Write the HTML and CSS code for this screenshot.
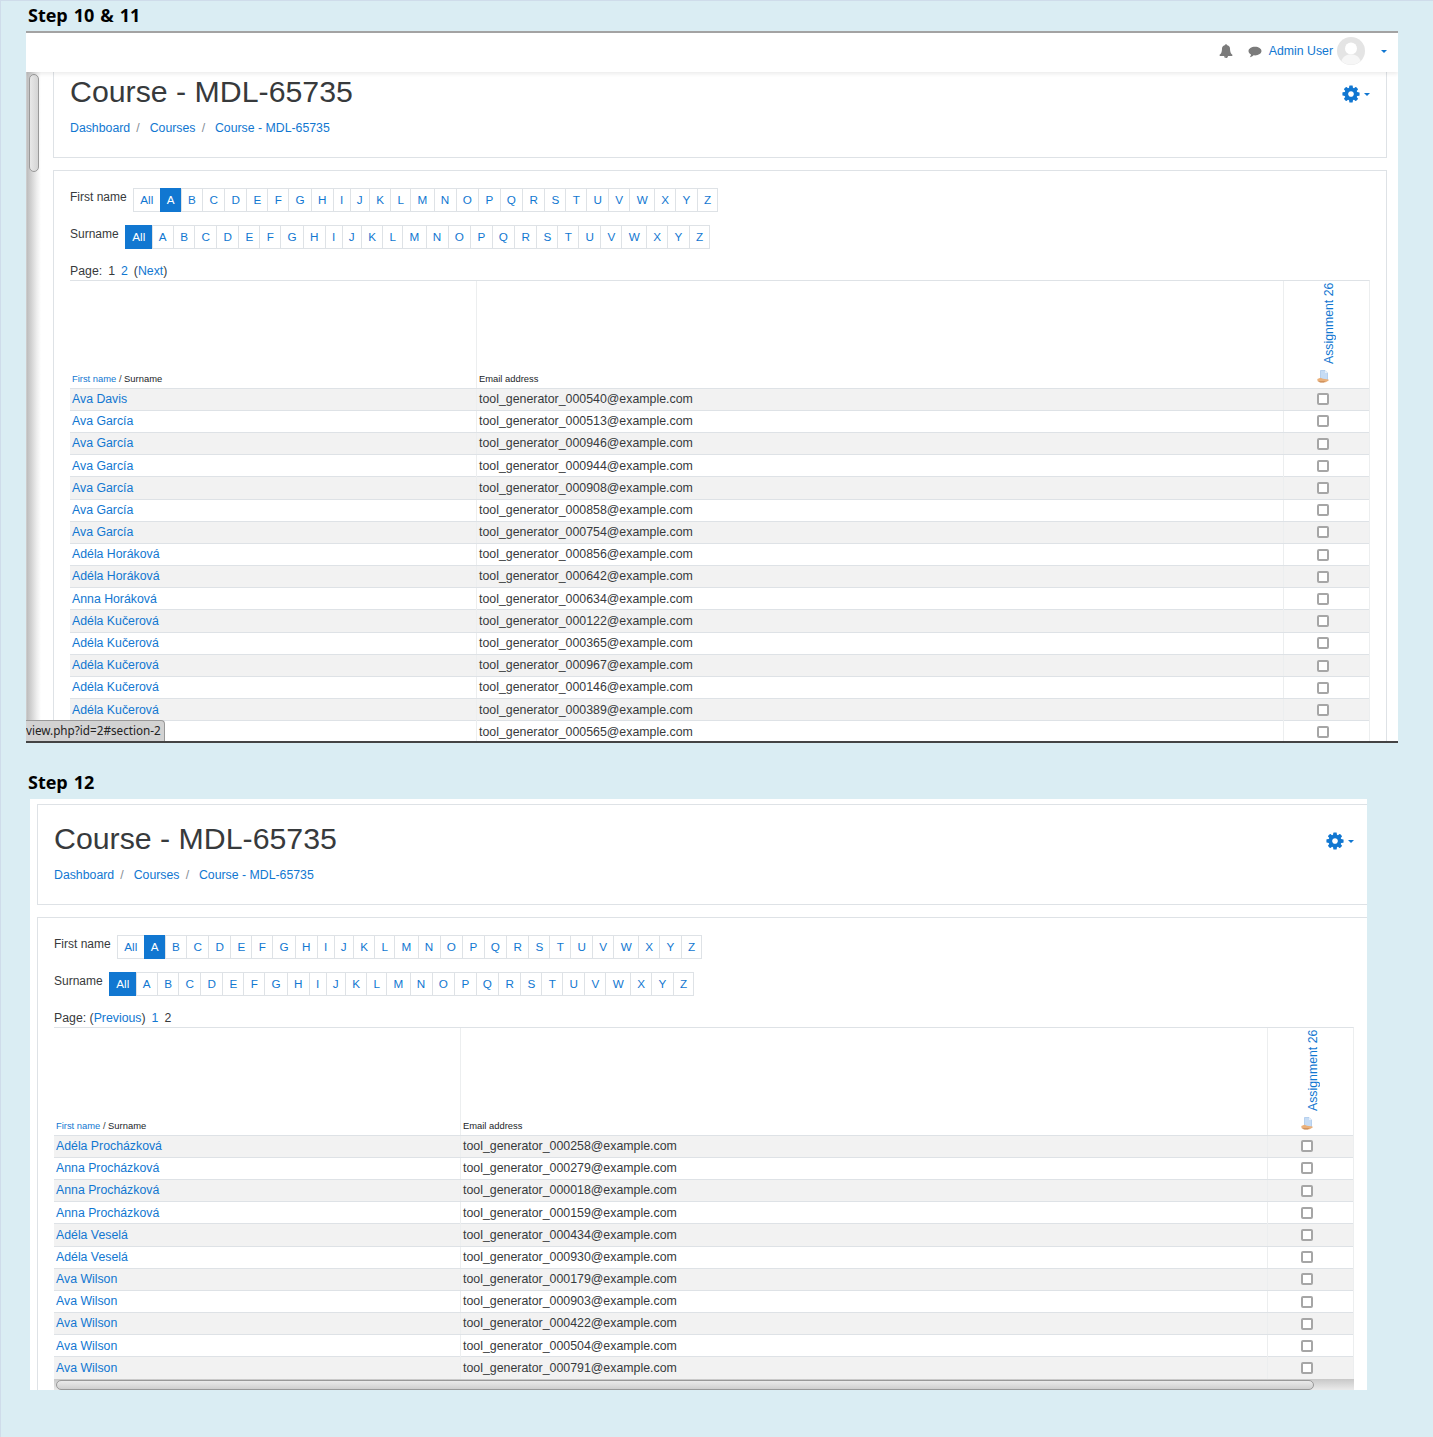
FILE: index.html
```html
<!DOCTYPE html>
<html lang="en">
<head>
<meta charset="utf-8">
<title>Course - MDL-65735</title>
<link rel="stylesheet" href="styles.css">
</head>
<body>
<svg class="defs" width="0" height="0" aria-hidden="true">
  <symbol id="cog" viewBox="0 0 1792 1792"><path d="M1152 896q0-106-75-181t-181-75-181 75-75 181 75 181 181 75 181-75 75-181zm512-109v222q0 12-8 23t-20 13l-185 28q-19 54-39 91 35 50 107 138 10 12 10 25t-9 23q-27 37-99 108t-94 71q-12 0-26-9l-138-108q-44 23-91 38-16 136-29 186-7 28-36 28h-222q-14 0-24.5-8.5t-11.5-21.5l-28-184q-49-16-90-37l-141 107q-10 9-25 9-14 0-25-11-126-114-165-168-7-10-7-23 0-12 8-23 15-21 51-66.5t54-70.5q-27-50-41-99l-183-27q-13-2-21-12.5t-8-23.5v-222q0-12 8-23t19-13l186-28q14-46 39-92-40-57-107-138-10-12-10-24 0-10 9-23 26-36 98.5-107.5t94.5-71.5q13 0 26 10l138 107q44-23 91-38 16-136 29-186 7-28 36-28h222q14 0 24.5 8.5t11.5 21.5l28 184q49 16 90 37l142-107q9-9 24-9 13 0 25 10 129 119 165 170 7 8 7 22 0 12-8 23-15 21-51 66.5t-54 70.5q26 50 41 98l183 28q13 2 21 12.5t8 23.5z"/></symbol>
  <symbol id="sub" viewBox="0 0 12 13"><path d="M3.500.5h4.500l2.500 2.500v7.500h-7z" fill="#c6dcf5" stroke="#a3c3e8" stroke-width=".7"/><path d="M8 .5v2.500h2.500z" fill="#e8f1fb"/><path d="M.3 9 3.500 7.800l2.500 1 5.500.6.200 1.200-3 1.700H4L.6 11.300z" fill="#eab07a"/><path d="M1 11.300h7.500l-1.500 1.200H3z" fill="#c98a55"/></symbol>
</svg>

<h2 class="step step-first">Step 10 &amp; 11</h2>
<section class="shot shot-one">
  <header class="navbar">
    <svg class="nav-icon" width="14" height="14" viewBox="0 0 1792 1792"><path fill="#7b7b7b" d="M912 1696q0-16-16-16-59 0-101.5-42.5t-42.5-101.5q0-16-16-16t-16 16q0 73 51.5 124.5t124.5 51.5q16 0 16-16zm816-288q0 52-38 90t-90 38h-448q0 106-75 181t-181 75-181-75-75-181h-448q-52 0-90-38t-38-90q50-42 91-88t85-119.5 74.5-158.5 50-206 19.5-260q0-152 117-282.5t307-158.5q-8-19-8-39 0-40 28-68t68-28 68 28 28 68q0 20-8 39 190 28 307 158.5t117 282.5q0 139 19.5 260t50 206 74.5 158.5 85 119.5 91 88z"/></svg>
    <svg class="nav-chat" width="14" height="12" viewBox="0 0 14 12"><path fill="#7b7b7b" d="M7 .8c3.600 0 6.500 1.900 6.500 4.300S10.600 9.400 7 9.400c-.5 0-1 0-1.500-.1C4.600 10.300 3.300 11 1.800 11.200c.7-.8 1.100-1.600 1.200-2.600C1.400 7.800.5 6.500.5 5.100.5 2.700 3.400.8 7 .8z"/></svg>
    <a class="nav-user" href="#">Admin User</a>
    <svg class="avatar" width="28" height="28" viewBox="0 0 28 28"><circle cx="14" cy="14" r="14" fill="#e4e4e4"/><circle cx="14" cy="11.500" r="6" fill="#fff"/><path d="M4.500 24c1.500-5 5-6.500 9.500-6.500s8 1.500 9.500 6.500a14 14 0 0 1-19 0z" fill="#f6f6f6"/></svg>
    <span class="caret"></span>
  </header>
  <div class="viewport">
    <div class="vscroll"><span class="vthumb"></span></div>
    <div class="page page-under-nav">
      <div class="card card-head">
        <div class="head-row">
          <h1 class="title">Course - MDL-65735</h1>
          <span class="settings"><svg class="cog" width="20" height="20"><use href="#cog"/></svg><span class="caret"></span></span>
        </div>
        <nav class="crumbs"><a href="#">Dashboard</a><span class="sep">/</span><a href="#">Courses</a><span class="sep">/</span><a href="#">Course - MDL-65735</a></nav>
      </div>
      <div class="card card-body">
        <div class="bar"><span class="bar-label">First name</span><ul class="letters"><li><a href="#">All</a></li><li class="on"><a href="#">A</a></li><li><a href="#">B</a></li><li><a href="#">C</a></li><li><a href="#">D</a></li><li><a href="#">E</a></li><li><a href="#">F</a></li><li><a href="#">G</a></li><li><a href="#">H</a></li><li><a href="#">I</a></li><li><a href="#">J</a></li><li><a href="#">K</a></li><li><a href="#">L</a></li><li><a href="#">M</a></li><li><a href="#">N</a></li><li><a href="#">O</a></li><li><a href="#">P</a></li><li><a href="#">Q</a></li><li><a href="#">R</a></li><li><a href="#">S</a></li><li><a href="#">T</a></li><li><a href="#">U</a></li><li><a href="#">V</a></li><li><a href="#">W</a></li><li><a href="#">X</a></li><li><a href="#">Y</a></li><li><a href="#">Z</a></li></ul></div>
        <div class="bar"><span class="bar-label">Surname</span><ul class="letters"><li class="on"><a href="#">All</a></li><li><a href="#">A</a></li><li><a href="#">B</a></li><li><a href="#">C</a></li><li><a href="#">D</a></li><li><a href="#">E</a></li><li><a href="#">F</a></li><li><a href="#">G</a></li><li><a href="#">H</a></li><li><a href="#">I</a></li><li><a href="#">J</a></li><li><a href="#">K</a></li><li><a href="#">L</a></li><li><a href="#">M</a></li><li><a href="#">N</a></li><li><a href="#">O</a></li><li><a href="#">P</a></li><li><a href="#">Q</a></li><li><a href="#">R</a></li><li><a href="#">S</a></li><li><a href="#">T</a></li><li><a href="#">U</a></li><li><a href="#">V</a></li><li><a href="#">W</a></li><li><a href="#">X</a></li><li><a href="#">Y</a></li><li><a href="#">Z</a></li></ul></div>
        <p class="paging"><span class="pg-label">Page:</span><span class="pg-first">1</span><a class="pg" href="#">2</a><span class="pg">(<a href="#">Next</a>)</span></p>
        <div class="grid">
          <div class="row row-head"><div class="c c1"><span class="th"><a href="#">First name</a> / <b>Surname</b></span></div><div class="c c2"><span class="th"><b>Email address</b></span></div><div class="c c3"><a class="vlink" href="#">Assignment 26</a><svg class="sub" width="12" height="13"><use href="#sub"/></svg></div></div>
          <div class="row"><div class="c c1"><a href="#">Ava Davis</a></div><div class="c c2">tool_generator_000540@example.com</div><div class="c c3"><span class="check"></span></div></div>
          <div class="row"><div class="c c1"><a href="#">Ava García</a></div><div class="c c2">tool_generator_000513@example.com</div><div class="c c3"><span class="check"></span></div></div>
          <div class="row"><div class="c c1"><a href="#">Ava García</a></div><div class="c c2">tool_generator_000946@example.com</div><div class="c c3"><span class="check"></span></div></div>
          <div class="row"><div class="c c1"><a href="#">Ava García</a></div><div class="c c2">tool_generator_000944@example.com</div><div class="c c3"><span class="check"></span></div></div>
          <div class="row"><div class="c c1"><a href="#">Ava García</a></div><div class="c c2">tool_generator_000908@example.com</div><div class="c c3"><span class="check"></span></div></div>
          <div class="row"><div class="c c1"><a href="#">Ava García</a></div><div class="c c2">tool_generator_000858@example.com</div><div class="c c3"><span class="check"></span></div></div>
          <div class="row"><div class="c c1"><a href="#">Ava García</a></div><div class="c c2">tool_generator_000754@example.com</div><div class="c c3"><span class="check"></span></div></div>
          <div class="row"><div class="c c1"><a href="#">Adéla Horáková</a></div><div class="c c2">tool_generator_000856@example.com</div><div class="c c3"><span class="check"></span></div></div>
          <div class="row"><div class="c c1"><a href="#">Adéla Horáková</a></div><div class="c c2">tool_generator_000642@example.com</div><div class="c c3"><span class="check"></span></div></div>
          <div class="row"><div class="c c1"><a href="#">Anna Horáková</a></div><div class="c c2">tool_generator_000634@example.com</div><div class="c c3"><span class="check"></span></div></div>
          <div class="row"><div class="c c1"><a href="#">Adéla Kučerová</a></div><div class="c c2">tool_generator_000122@example.com</div><div class="c c3"><span class="check"></span></div></div>
          <div class="row"><div class="c c1"><a href="#">Adéla Kučerová</a></div><div class="c c2">tool_generator_000365@example.com</div><div class="c c3"><span class="check"></span></div></div>
          <div class="row"><div class="c c1"><a href="#">Adéla Kučerová</a></div><div class="c c2">tool_generator_000967@example.com</div><div class="c c3"><span class="check"></span></div></div>
          <div class="row"><div class="c c1"><a href="#">Adéla Kučerová</a></div><div class="c c2">tool_generator_000146@example.com</div><div class="c c3"><span class="check"></span></div></div>
          <div class="row"><div class="c c1"><a href="#">Adéla Kučerová</a></div><div class="c c2">tool_generator_000389@example.com</div><div class="c c3"><span class="check"></span></div></div>
          <div class="row"><div class="c c1"></div><div class="c c2">tool_generator_000565@example.com</div><div class="c c3"><span class="check"></span></div></div>
        </div>
      </div>
    </div>
    <div class="status">view.php?id=2#section-2</div>
  </div>
</section>

<h2 class="step step-second">Step 12</h2>
<section class="shot shot-two">
  <div class="page">
    <div class="card card-head">
      <div class="head-row">
        <h1 class="title">Course - MDL-65735</h1>
        <span class="settings"><svg class="cog" width="20" height="20"><use href="#cog"/></svg><span class="caret"></span></span>
      </div>
      <nav class="crumbs"><a href="#">Dashboard</a><span class="sep">/</span><a href="#">Courses</a><span class="sep">/</span><a href="#">Course - MDL-65735</a></nav>
    </div>
    <div class="card card-body">
      <div class="bar"><span class="bar-label">First name</span><ul class="letters"><li><a href="#">All</a></li><li class="on"><a href="#">A</a></li><li><a href="#">B</a></li><li><a href="#">C</a></li><li><a href="#">D</a></li><li><a href="#">E</a></li><li><a href="#">F</a></li><li><a href="#">G</a></li><li><a href="#">H</a></li><li><a href="#">I</a></li><li><a href="#">J</a></li><li><a href="#">K</a></li><li><a href="#">L</a></li><li><a href="#">M</a></li><li><a href="#">N</a></li><li><a href="#">O</a></li><li><a href="#">P</a></li><li><a href="#">Q</a></li><li><a href="#">R</a></li><li><a href="#">S</a></li><li><a href="#">T</a></li><li><a href="#">U</a></li><li><a href="#">V</a></li><li><a href="#">W</a></li><li><a href="#">X</a></li><li><a href="#">Y</a></li><li><a href="#">Z</a></li></ul></div>
      <div class="bar"><span class="bar-label">Surname</span><ul class="letters"><li class="on"><a href="#">All</a></li><li><a href="#">A</a></li><li><a href="#">B</a></li><li><a href="#">C</a></li><li><a href="#">D</a></li><li><a href="#">E</a></li><li><a href="#">F</a></li><li><a href="#">G</a></li><li><a href="#">H</a></li><li><a href="#">I</a></li><li><a href="#">J</a></li><li><a href="#">K</a></li><li><a href="#">L</a></li><li><a href="#">M</a></li><li><a href="#">N</a></li><li><a href="#">O</a></li><li><a href="#">P</a></li><li><a href="#">Q</a></li><li><a href="#">R</a></li><li><a href="#">S</a></li><li><a href="#">T</a></li><li><a href="#">U</a></li><li><a href="#">V</a></li><li><a href="#">W</a></li><li><a href="#">X</a></li><li><a href="#">Y</a></li><li><a href="#">Z</a></li></ul></div>
      <p class="paging">Page: (<a href="#">Previous</a>)<a class="pg" href="#">1</a><span class="pg">2</span></p>
      <div class="grid">
        <div class="row row-head"><div class="c c1"><span class="th"><a href="#">First name</a> / <b>Surname</b></span></div><div class="c c2"><span class="th"><b>Email address</b></span></div><div class="c c3"><a class="vlink" href="#">Assignment 26</a><svg class="sub" width="12" height="13"><use href="#sub"/></svg></div></div>
        <div class="row"><div class="c c1"><a href="#">Adéla Procházková</a></div><div class="c c2">tool_generator_000258@example.com</div><div class="c c3"><span class="check"></span></div></div>
        <div class="row"><div class="c c1"><a href="#">Anna Procházková</a></div><div class="c c2">tool_generator_000279@example.com</div><div class="c c3"><span class="check"></span></div></div>
        <div class="row"><div class="c c1"><a href="#">Anna Procházková</a></div><div class="c c2">tool_generator_000018@example.com</div><div class="c c3"><span class="check"></span></div></div>
        <div class="row"><div class="c c1"><a href="#">Anna Procházková</a></div><div class="c c2">tool_generator_000159@example.com</div><div class="c c3"><span class="check"></span></div></div>
        <div class="row"><div class="c c1"><a href="#">Adéla Veselá</a></div><div class="c c2">tool_generator_000434@example.com</div><div class="c c3"><span class="check"></span></div></div>
        <div class="row"><div class="c c1"><a href="#">Adéla Veselá</a></div><div class="c c2">tool_generator_000930@example.com</div><div class="c c3"><span class="check"></span></div></div>
        <div class="row"><div class="c c1"><a href="#">Ava Wilson</a></div><div class="c c2">tool_generator_000179@example.com</div><div class="c c3"><span class="check"></span></div></div>
        <div class="row"><div class="c c1"><a href="#">Ava Wilson</a></div><div class="c c2">tool_generator_000903@example.com</div><div class="c c3"><span class="check"></span></div></div>
        <div class="row"><div class="c c1"><a href="#">Ava Wilson</a></div><div class="c c2">tool_generator_000422@example.com</div><div class="c c3"><span class="check"></span></div></div>
        <div class="row"><div class="c c1"><a href="#">Ava Wilson</a></div><div class="c c2">tool_generator_000504@example.com</div><div class="c c3"><span class="check"></span></div></div>
        <div class="row"><div class="c c1"><a href="#">Ava Wilson</a></div><div class="c c2">tool_generator_000791@example.com</div><div class="c c3"><span class="check"></span></div></div>
      </div>
      <div class="hscroll"><span class="hthumb"></span></div>
    </div>
  </div>
</section>
</body>
</html>
```
FILE: styles.css
```css
* { box-sizing: border-box; }
html, body { margin: 0; padding: 0; }
body {
  height: 1437px;
  background: #daedf3;
  border-left: 1px solid #cfdcea;
  border-top: 1px solid #cfdcea;
  font-family: "Liberation Sans", Arial, sans-serif;
  font-size: 12.3px;
  color: #373a3c;
  overflow: hidden;
}
a { color: #1177d1; text-decoration: none; }
.defs { position: absolute; }

.step {
  margin: 0;
  font-family: "Open Sans", "Noto Sans", sans-serif;
  font-size: 18px;
  font-weight: 700;
  line-height: 24px;
  word-spacing: 1.3px;
  color: #000;
  padding-left: 27px;
}
.step-first { padding-top: 2px; height: 30px; }
.step-second { padding-top: 27px; height: 56px; }

.shot { background: #fff; overflow: hidden; }
.shot-one {
  position: relative;
  margin-left: 25px;
  width: 1372px;
  height: 712px;
  border-top: 2px solid #a3a3a3;
  border-bottom: 2px solid #444;
  display: flex;
  flex-direction: column;
}
.shot-two {
  margin-left: 29px;
  width: 1337px;
  height: 591px;
  padding: 5px 0 0 7px;
}

.navbar {
  position: relative;
  z-index: 2;
  flex: none;
  height: 39px;
  background: #fff;
  box-shadow: 0 2px 4px rgba(0, 0, 0, .08);
  display: flex;
  align-items: center;
  justify-content: flex-end;
  padding: 0 11px 3px 0;
}
.nav-icon { margin-right: 15px; }
.nav-chat { margin-right: 7px; margin-top: 2px; }
.nav-user { margin-right: 4px; }
.avatar { margin-right: 16px; }
.caret {
  display: inline-block;
  width: 0;
  height: 0;
  border-left: 3px solid transparent;
  border-right: 3px solid transparent;
  border-top: 3px solid #1177d1;
}

.viewport { flex: 1; min-height: 0; display: flex; border-left: 1px solid #ccc; }
.vscroll {
  flex: none;
  width: 14px;
  padding: 2px 2px 0;
  background: linear-gradient(90deg, #bdbdbd, #eee 70%, #fff);
}
.vthumb {
  display: block;
  height: 98px;
  border: 1px solid #999;
  border-radius: 5px;
  background: linear-gradient(90deg, #e8e8e8, #d4d4d4);
}
.page { flex: 1; min-width: 0; }
.page-under-nav { margin-top: -15px; padding: 0 11px 0 12px; }
.shot-two .page { width: 1334px; }

.card { background: #fff; border: 1px solid #dee2e6; }
.card-head { height: 101px; padding: 16px 16px 0; margin-bottom: 12px; }
.head-row { display: flex; justify-content: space-between; align-items: center; }
.title { margin: 0; font-size: 30.3px; font-weight: 400; line-height: 36px; color: #373a3c; }
.settings { display: flex; align-items: center; gap: 3px; margin-top: 4px; }
.cog { fill: #1177d1; }
.crumbs { margin-top: 9px; line-height: 18px; }
.sep { color: #868e96; margin: 0 9.9px 0 6.2px; }

.card-body { padding: 17px 16px 0; }
.bar { display: flex; margin-bottom: 13px; height: 24px; }
.bar-label { margin-right: 6.3px; font-size: 12px; line-height: 18px; }
.letters { display: flex; list-style: none; margin: 0; padding: 0; font-size: 11.7px; }
.letters li { margin-left: -1px; }
.letters li:first-child { margin-left: 0; }
.letters a {
  display: block;
  height: 24px;
  line-height: 22px;
  padding: 0 6.28px;
  background: #fff;
  border: 1px solid #dee2e6;
  text-align: center;
}
.letters .on a { background: #1177d1; border-color: #1177d1; color: #fff; }
.paging { margin: 0; padding-top: 2px; height: 18px; line-height: 15px; }
.pg-first { margin-left: 6px; }
.pg { margin-left: 6px; }

.grid { border-top: 1px solid #dee2e6; border-right: 1px solid #eceeef; }
.row {
  display: grid;
  grid-template-columns: 407px 807px 1fr;
  height: 22.2px;
  line-height: 21px;
  border-top: 1px solid #dee2e6;
}
.row:nth-child(even) { background: #f2f2f2; }
.row-head { height: 106.6px; border-top: 0; background: #fff; }
.c { padding: .4px 0 0 2px; white-space: nowrap; border-right: 1px solid #eceeef; }
.c2 { font-size: 12.36px; }
.c3 { border-right: 0; padding: 0 8px 0 0; display: flex; justify-content: center; align-items: center; }
.row-head .c1, .row-head .c2 { display: flex; align-items: flex-end; padding-bottom: 2px; }
.th { font-size: 9.4px; line-height: 14px; }
.th b { font-weight: 400; color: #212529; }
.row-head .c3 { flex-direction: column; justify-content: flex-start; padding-top: 2px; }
.vlink {
  writing-mode: vertical-rl;
  transform: rotate(180deg);
  line-height: 14px;
  margin-left: 12px;
  height: 81px;
}
.sub { margin-top: 6px; }
.check {
  display: block;
  width: 12px;
  height: 12px;
  border: 2px solid #a6a6a6;
  border-radius: 2px;
  background: #fff;
}

.status {
  position: absolute;
  left: 0;
  bottom: 0;
  width: 139px;
  height: 21px;
  background: #d2d2d2;
  border: 1px solid #999;
  border-left: 0;
  border-bottom: 0;
  border-top-right-radius: 4px;
  font-family: "Noto Sans", sans-serif;
  font-size: 11.7px;
  line-height: 18px;
  color: #222;
  text-align: right;
  white-space: nowrap;
  padding-right: 4px;
  z-index: 3;
}

.hscroll {
  height: 12px;
  padding: 1px 40px 0 2px;
  background: linear-gradient(#c8c8c8, #eee);
}
.hthumb {
  display: block;
  height: 10px;
  border: 1px solid #999;
  border-radius: 5px;
  background: linear-gradient(#eaeaea, #cfcfcf);
}
```
